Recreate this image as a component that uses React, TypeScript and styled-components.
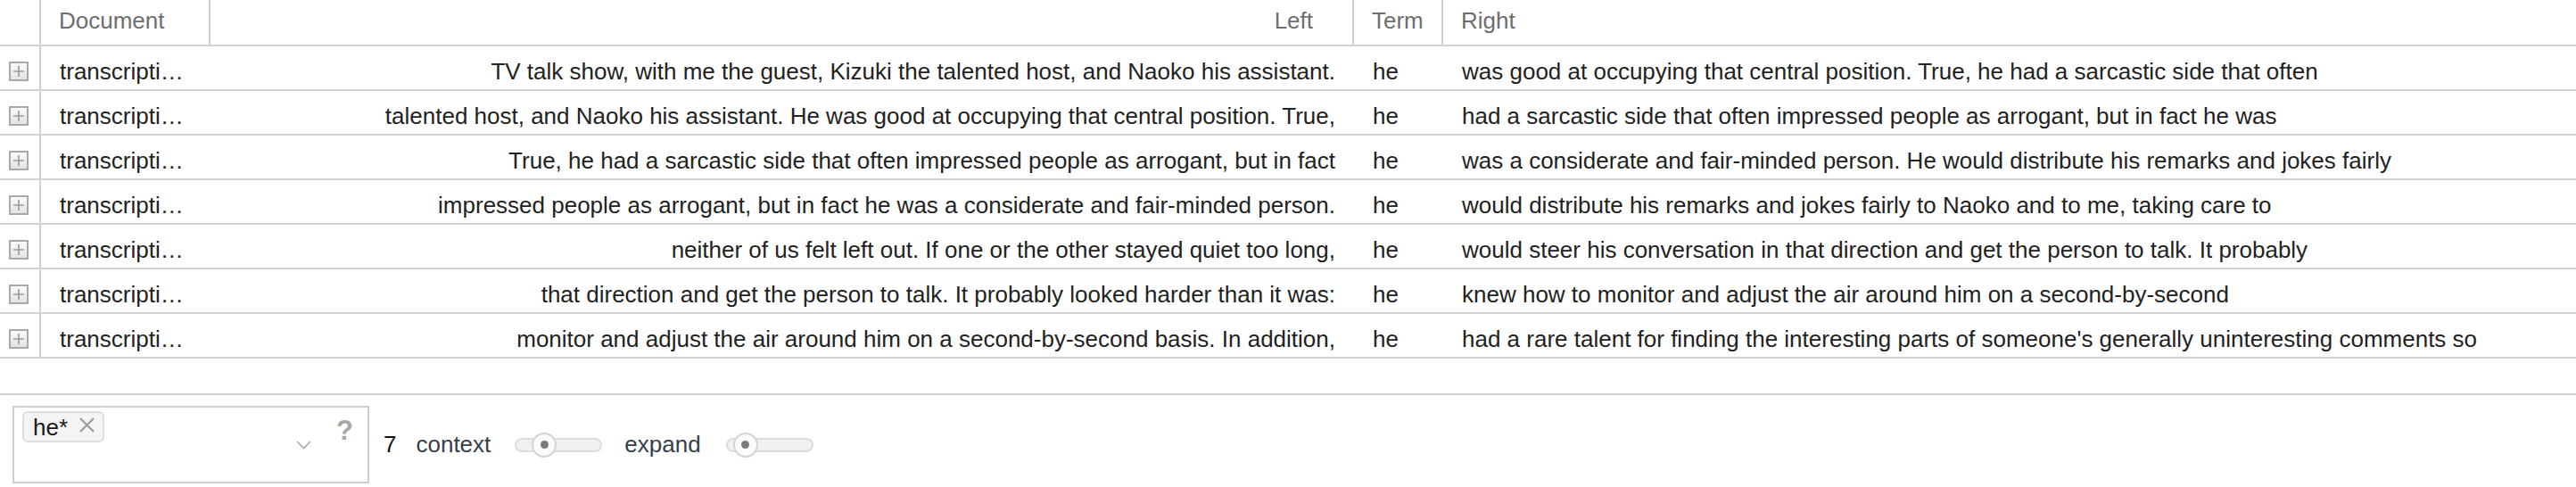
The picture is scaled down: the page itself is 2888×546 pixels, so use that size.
import React from "react";
import styled, { createGlobalStyle } from "styled-components";

const GlobalStyle = createGlobalStyle`
  html, body {
    margin: 0;
    padding: 0;
    background: #fff;
  }
  body {
    font-family: "Liberation Sans", Arial, sans-serif;
    font-size: 26px;
    color: #222;
  }
`;

type Row = { doc: string; left: string; term: string; right: string };

const rows: Row[] = [
  {
    doc: "transcripti…",
    left: "TV talk show, with me the guest, Kizuki the talented host, and Naoko his assistant.",
    term: "he",
    right: "was good at occupying that central position. True, he had a sarcastic side that often",
  },
  {
    doc: "transcripti…",
    left: "talented host, and Naoko his assistant. He was good at occupying that central position. True,",
    term: "he",
    right: "had a sarcastic side that often impressed people as arrogant, but in fact he was",
  },
  {
    doc: "transcripti…",
    left: "True, he had a sarcastic side that often impressed people as arrogant, but in fact",
    term: "he",
    right: "was a considerate and fair-minded person. He would distribute his remarks and jokes fairly",
  },
  {
    doc: "transcripti…",
    left: "impressed people as arrogant, but in fact he was a considerate and fair-minded person.",
    term: "he",
    right: "would distribute his remarks and jokes fairly to Naoko and to me, taking care to",
  },
  {
    doc: "transcripti…",
    left: "neither of us felt left out. If one or the other stayed quiet too long,",
    term: "he",
    right: "would steer his conversation in that direction and get the person to talk. It probably",
  },
  {
    doc: "transcripti…",
    left: "that direction and get the person to talk. It probably looked harder than it was:",
    term: "he",
    right: "knew how to monitor and adjust the air around him on a second-by-second",
  },
  {
    doc: "transcripti…",
    left: "monitor and adjust the air around him on a second-by-second basis. In addition,",
    term: "he",
    right: "had a rare talent for finding the interesting parts of someone's generally uninteresting comments so",
  },
];

const COLUMNS = "46px 190px 1282px 100px 1fr";
const LINE = "#d2d2d2";

const Page = styled.div`
  width: 2888px;
  height: 546px;
  display: flex;
  flex-direction: column;
  overflow: hidden;
`;

const Grid = styled.div`
  display: flex;
  flex-direction: column;
  height: 441px;
  border-bottom: 2px solid ${LINE};
`;

const HeaderRow = styled.div`
  display: grid;
  grid-template-columns: ${COLUMNS};
  height: 52px;
  box-sizing: border-box;
  border-bottom: 2px solid ${LINE};
`;

const HeaderCell = styled.div<{ $align?: "left" | "right"; $last?: boolean }>`
  box-sizing: border-box;
  border-right: ${(p) => (p.$last ? "none" : `2px solid ${LINE}`)};
  color: #6e6e6e;
  line-height: 46px;
  padding: 0 ${(p) => (p.$align === "right" ? "44px" : "20px")} 0 20px;
  text-align: ${(p) => p.$align || "left"};
  white-space: nowrap;
`;

const BodyRow = styled.div`
  display: grid;
  grid-template-columns: ${COLUMNS};
  height: 50px;
  box-sizing: border-box;
  border-bottom: 2px solid ${LINE};
`;

const ExpandCell = styled.div`
  box-sizing: border-box;
  border-right: 2px solid ${LINE};
  display: flex;
  align-items: flex-start;
  padding: 17px 0 0 10px;
`;

const Cell = styled.div<{ $align?: "left" | "right" }>`
  box-sizing: border-box;
  padding: 8px 21px 0 21px;
  line-height: 40px;
  text-align: ${(p) => p.$align || "left"};
  white-space: nowrap;
`;

const Footer = styled.div`
  display: flex;
  align-items: center;
  padding: 12px 14px 0;
`;

const TermBox = styled.div`
  box-sizing: border-box;
  width: 400px;
  height: 87px;
  border: 2px solid #cfcfcf;
  display: flex;
  align-items: flex-start;
  padding: 4px 16px 0 9px;
`;

const Tags = styled.div`
  flex: 1;
  display: flex;
  gap: 6px;
`;

const Tag = styled.div`
  display: flex;
  align-items: flex-start;
  height: 35px;
  box-sizing: border-box;
  padding: 0 8px 0 10px;
  background: #f4f4f4;
  border: 2px solid #dedede;
  border-radius: 6px;
  line-height: 33px;
  color: #1a1a1a;
`;

const TagRemove = styled.span`
  margin-left: 12px;
  margin-top: 4px;
  display: flex;
`;

const Chevron = styled.span`
  display: flex;
  margin-top: 33px;
  margin-right: 28px;
`;

const Help = styled.span`
  font-weight: bold;
  font-size: 31px;
  line-height: 31px;
  color: #a7a7a7;
  margin-top: 6px;
`;

const Count = styled.span`
  margin-left: 16px;
  color: #111;
`;

const Label = styled.span<{ $gap: number }>`
  color: #36404a;
  margin-left: ${(p) => p.$gap}px;
`;

const Slider = styled.div<{ $gap: number }>`
  position: relative;
  width: 98px;
  height: 16px;
  box-sizing: border-box;
  margin-left: ${(p) => p.$gap}px;
  border: 2px solid #dcdcdc;
  border-radius: 8px;
  background: #f1f1f1;
`;

const Thumb = styled.div`
  position: absolute;
  top: 50%;
  width: 28px;
  height: 28px;
  margin: -14px 0 0 -14px;
  box-sizing: border-box;
  border-radius: 50%;
  border: 2px solid #d4d4d4;
  background: #fbfbfb;
  display: flex;
  align-items: center;
  justify-content: center;

  &::after {
    content: "";
    width: 9px;
    height: 9px;
    border-radius: 50%;
    background: #7a7a7a;
  }
`;

function ExpandIcon() {
  return (
    <svg width="22" height="22" viewBox="0 0 22 22">
      <defs>
        <linearGradient id="eg" x1="0" y1="0" x2="0" y2="1">
          <stop offset="0" stopColor="#fbfbfb" />
          <stop offset="1" stopColor="#e2e2e2" />
        </linearGradient>
      </defs>
      <rect x="1" y="1" width="20" height="20" fill="url(#eg)" stroke="#a8a8a8" strokeWidth="2" />
      <path d="M11 5v12M5 11h12" stroke="#9a9a9a" strokeWidth="1.6" />
    </svg>
  );
}

export default function App() {
  return (
    <Page>
      <GlobalStyle />
      <Grid>
        <HeaderRow>
          <HeaderCell />
          <HeaderCell>Document</HeaderCell>
          <HeaderCell $align="right">Left</HeaderCell>
          <HeaderCell>Term</HeaderCell>
          <HeaderCell $last>Right</HeaderCell>
        </HeaderRow>
        {rows.map((r, i) => (
          <BodyRow key={i}>
            <ExpandCell>
              <ExpandIcon />
            </ExpandCell>
            <Cell>{r.doc}</Cell>
            <Cell $align="right">{r.left}</Cell>
            <Cell>{r.term}</Cell>
            <Cell>{r.right}</Cell>
          </BodyRow>
        ))}
      </Grid>
      <Footer>
        <TermBox>
          <Tags>
            <Tag>
              he*
              <TagRemove>
                <svg width="19" height="19" viewBox="0 0 19 19">
                  <path d="M2 2l15 15M17 2L2 17" stroke="#9c9c9c" strokeWidth="2.2" />
                </svg>
              </TagRemove>
            </Tag>
          </Tags>
          <Chevron>
            <svg width="17" height="10" viewBox="0 0 17 10">
              <path d="M1 1l7.5 7.5L16 1" fill="none" stroke="#aaaaaa" strokeWidth="1.6" />
            </svg>
          </Chevron>
          <Help>?</Help>
        </TermBox>
        <Count>7</Count>
        <Label $gap={22}>context</Label>
        <Slider $gap={27}>
          <Thumb style={{ left: "31px" }} />
        </Slider>
        <Label $gap={25}>expand</Label>
        <Slider $gap={28}>
          <Thumb style={{ left: "20px" }} />
        </Slider>
      </Footer>
    </Page>
  );
}
